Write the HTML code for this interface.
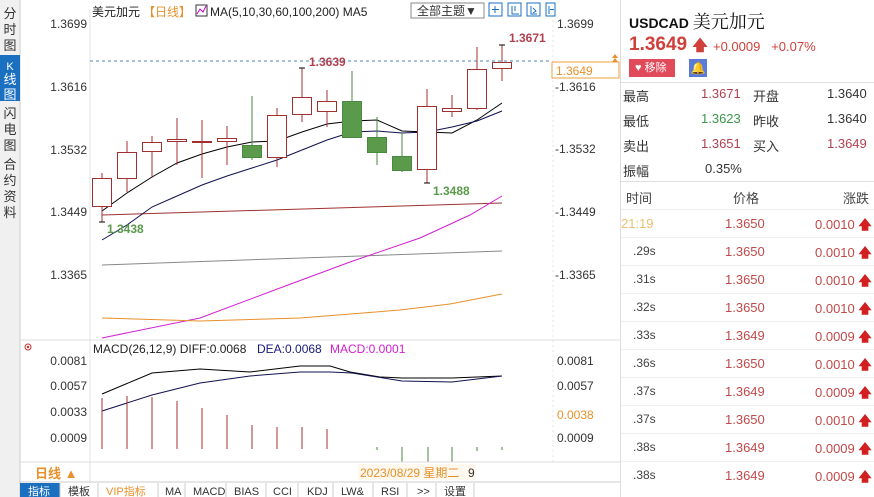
<!DOCTYPE html>
<html><head><meta charset="utf-8"><style>
*{margin:0;padding:0;box-sizing:border-box}
body{width:874px;height:497px;overflow:hidden;background:#fff;font-family:"Liberation Sans","Noto Sans CJK SC",sans-serif;position:relative}
svg{position:absolute;left:0;top:0}
.rp{position:absolute;left:620px;top:0;width:254px;height:497px;border-left:1px solid #ddd}
.r{position:absolute;font-size:13px}
</style></head><body>
<svg width="620" height="497" font-family="Liberation Sans, Noto Sans CJK SC, sans-serif">
<!-- left sidebar -->
<rect x="0" y="0" width="20" height="497" fill="#f0f0f0"/>
<line x1="20" y1="0" x2="20" y2="497" stroke="#ccc"/>
<rect x="0" y="55" width="20" height="46" fill="#1a6fc0"/>
<g font-size="13" fill="#333" text-anchor="middle">
<text x="10" y="18">分</text><text x="10" y="34">时</text><text x="10" y="50">图</text>
<text x="10" y="70" fill="#fff" font-size="11">K</text><text x="10" y="84" fill="#fff">线</text><text x="10" y="99" fill="#fff">图</text>
<text x="10" y="118">闪</text><text x="10" y="134">电</text><text x="10" y="150">图</text>
<text x="10" y="169">合</text><text x="10" y="185">约</text><text x="10" y="201">资</text><text x="10" y="217">料</text>
</g>
<line x1="90" y1="10" x2="90" y2="462" stroke="#e4e4e4"/>
<line x1="553" y1="10" x2="553" y2="462" stroke="#e4e4e4" stroke-dasharray="2,3"/>
<!-- header -->
<text x="92" y="16" font-size="12" fill="#222">美元加元</text>
<text x="143" y="16" font-size="12" fill="#e8902a">【日线】</text>
<rect x="196" y="5" width="11" height="11" fill="none" stroke="#333"/><path d="M197 14l3-5 3 3 3-6" stroke="#c0c" fill="none"/>
<text x="210" y="16" font-size="12" fill="#222">MA(5,10,30,60,100,200) MA5</text>
<rect x="411" y="3" width="73" height="15" fill="#fff" stroke="#888"/>
<text x="417" y="15" font-size="12" fill="#333">全部主题▼</text>
<g stroke="#1a6fc0" fill="none"><rect x="489" y="3" width="13" height="13"/><rect x="508" y="3" width="13" height="13"/><rect x="527" y="3" width="13" height="13"/><rect x="546" y="3" width="9" height="13"/>
<path d="M495 6v7M492 9.5h7M512 6v8h7M515 6v5M531 6v8h6M533 8l3 3-3 2M549 6v8M550 9.5h4"/></g>
<!-- axis labels -->
<g font-size="12" fill="#333" text-anchor="end">
<text x="87" y="28">1.3699</text><text x="87" y="91">1.3616</text><text x="87" y="154">1.3532</text><text x="87" y="216">1.3449</text><text x="87" y="279">1.3365</text>
<text x="87" y="365">0.0081</text><text x="87" y="390">0.0057</text><text x="87" y="416">0.0033</text><text x="87" y="442">0.0009</text>
</g>
<g font-size="12" fill="#333">
<text x="557" y="28">1.3699</text><text x="555" y="91">-1.3616</text><text x="555" y="153">-1.3532</text><text x="555" y="216">-1.3449</text><text x="555" y="279">-1.3365</text>
<text x="557" y="365">0.0081</text><text x="557" y="390">0.0057</text><text x="557" y="442">0.0009</text>
<text x="557" y="419" fill="#e8902a">0.0038</text>
</g>
<rect x="552" y="62" width="67" height="16" fill="#fff" stroke="#e8a040"/>
<text x="556" y="75" font-size="12" fill="#e8902a">1.3649</text>
<path d="M612 58l3-4 3 4zM612 62l3-4 3 4z" fill="#e8902a"/>
<line x1="90" y1="61" x2="552" y2="61" stroke="#4a8ab0" stroke-dasharray="3,3"/>
<!-- MAs -->
<polyline fill="none" stroke="#a03030" points="102,215 502,203"/>
<polyline fill="none" stroke="#888" points="102,265 502,251"/>
<polyline fill="none" stroke="#d020d0" points="102,338 200,318 280,288 350,262 420,238 470,215 502,196"/>
<polyline fill="none" stroke="#e8902a" points="102,318 200,321 300,318 400,310 450,304 502,294"/>
<polyline fill="none" stroke="#000" points="102,211 127,193 152,177 177,163 202,154 227,147 252,142 277,141 302,132 327,124 352,121 377,120 402,131 427,132 452,133 477,120 502,103"/>
<polyline fill="none" stroke="#101050" points="102,240 127,225 152,207 177,196 202,185 227,176 252,168 277,160 302,150 327,140 352,132 377,131 402,133 427,132 452,127 477,121 502,111"/>
<!-- candles -->
<g stroke="#a03030" fill="#fff">
<line x1="102" y1="173" x2="102" y2="222"/><rect x="92.5" y="178.5" width="19" height="28"/>
<line x1="127" y1="141" x2="127" y2="192"/><rect x="117.5" y="152.5" width="19" height="26"/>
<line x1="152" y1="136" x2="152" y2="178"/><rect x="142.5" y="142.5" width="19" height="9"/>
<line x1="177" y1="118" x2="177" y2="165"/><rect x="167.5" y="139.5" width="19" height="2"/>
<line x1="202" y1="120" x2="202" y2="178"/><rect x="192.5" y="141.5" width="19" height="1" fill="#a03030"/>
<line x1="227" y1="126" x2="227" y2="165"/><rect x="217.5" y="138.5" width="19" height="3"/>
<line x1="277" y1="108" x2="277" y2="167"/><rect x="267.5" y="115.5" width="19" height="42"/>
<line x1="302" y1="68" x2="302" y2="122"/><rect x="292.5" y="97.5" width="19" height="17"/>
<line x1="327" y1="90" x2="327" y2="127"/><rect x="317.5" y="101.5" width="19" height="10"/>
<line x1="427" y1="89" x2="427" y2="183"/><rect x="417.5" y="106.5" width="19" height="63"/>
<line x1="452" y1="95" x2="452" y2="117"/><rect x="442.5" y="108.5" width="19" height="3"/>
<line x1="477" y1="47" x2="477" y2="110"/><rect x="467.5" y="69.5" width="19" height="39"/>
<line x1="502" y1="45" x2="502" y2="81"/><rect x="492.5" y="62.5" width="19" height="6"/>
</g>
<g stroke="#4a8a40" fill="#5a9a4a">
<line x1="252" y1="96" x2="252" y2="160"/><rect x="242.5" y="145.5" width="19" height="12"/>
<line x1="352" y1="71" x2="352" y2="137"/><rect x="342.5" y="101.5" width="19" height="36"/>
<line x1="377" y1="117" x2="377" y2="165"/><rect x="367.5" y="137.5" width="19" height="15"/>
<line x1="402" y1="133" x2="402" y2="172"/><rect x="392.5" y="156.5" width="19" height="14"/>
</g>
<path d="M99 222h6M299 68h6M424 183h6M499 45h6" stroke="#000"/>
<g font-size="12" font-weight="bold">
<text x="309" y="66" fill="#b04050">1.3639</text>
<text x="509" y="42" fill="#b04050">1.3671</text>
<text x="433" y="195" fill="#5a9a4a">1.3488</text>
<text x="107" y="233" fill="#5a9a4a">1.3438</text>
</g>
<line x1="20" y1="340" x2="620" y2="340" stroke="#ddd"/>
<!-- MACD -->
<circle cx="28" cy="347" r="3" fill="none" stroke="#c03030"/><circle cx="28" cy="347" r="1.2" fill="#c03030"/>
<text x="93" y="353" font-size="12" fill="#222">MACD(26,12,9) DIFF:0.0068</text>
<text x="257" y="353" font-size="12" fill="#1a1a7a">DEA:0.0068</text>
<text x="330" y="353" font-size="12" fill="#d020d0">MACD:0.0001</text>
<polyline fill="none" stroke="#000" points="102,394 152,373 200,369 250,372 300,366 330,366 350,372 380,377 402,378 452,378 502,376"/>
<polyline fill="none" stroke="#101050" points="102,411 152,395 200,383 250,376 300,372 330,372 352,373 377,377 402,381 452,382 502,376"/>
<g stroke="#a03030"><path d="M102 398V449M127 396V449M152 397V449M177 401V449M202 408V449M227 415V449M252 425V449M277 427V449M302 427V449M327 429V449"/></g>
<g stroke="#4a8a40"><path d="M377 447V450M402 447V462M428 447V462M452 447V462M477 447V451M502 447V450"/></g>
<!-- date bar -->
<line x1="20" y1="462" x2="620" y2="462" stroke="#ddd"/>
<text x="35" y="478" font-size="13" fill="#e8902a" font-weight="bold">日线 ▲</text>
<line x1="90" y1="462" x2="90" y2="482" stroke="#ddd"/>
<rect x="358" y="464" width="118" height="16" fill="#fff8ee"/>
<text x="360" y="477" font-size="12" fill="#e8902a">2023/08/29 星期二</text><text x="468" y="477" font-size="12" fill="#333">9</text>
<line x1="20" y1="482" x2="620" y2="482" stroke="#ccc"/>
<!-- tabs -->
<rect x="20" y="483" width="40" height="14" fill="#1a6fc0"/>
<g font-size="11" fill="#333">
<text x="28" y="495" fill="#fff">指标</text>
<text x="68" y="495">模板</text>
<text x="106" y="495" fill="#e8902a">VIP指标</text>
<text x="165" y="495">MA</text><text x="193" y="495">MACD</text><text x="234" y="495">BIAS</text>
<text x="273" y="495">CCI</text><text x="307" y="495">KDJ</text><text x="341" y="495">LW&amp;</text>
<text x="381" y="495">RSI</text><text x="417" y="495">&gt;&gt;</text><text x="444" y="495">设置</text>
</g>
<g stroke="#ccc"><path d="M60 483v14M98 483v14M158 483v14M185 483v14M226 483v14M266 483v14M298 483v14M333 483v14M373 483v14M407 483v14M436 483v14M474 483v14"/></g>
</svg>
<div class="rp">
<div class="r" style="left:8px;top:8px;font-size:14px;font-weight:bold;color:#111">USDCAD <span style="font-family:'Noto Serif CJK SC',serif;font-size:18px;font-weight:normal">美元加元</span></div>
<div class="r" style="left:8px;top:34px;font-size:19px;font-weight:bold;color:#d0403a">1.3649 <span style="font-size:15px">🡅</span></div>
<div class="r" style="left:92px;top:39px;color:#d0403a">+0.0009&nbsp;&nbsp;&nbsp;+0.07%</div>
<div class="r" style="left:8px;top:59px;width:46px;height:18px;background:#e04a5a;color:#fff;font-size:11px;line-height:18px;padding-left:6px">♥ 移除</div>
<div class="r" style="left:68px;top:59px;width:18px;height:18px;background:#5a7ad8;color:#fff;font-size:12px;text-align:center;line-height:18px">🔔</div>
<div style="position:absolute;left:0;top:82px;width:254px;border-top:1px solid #ddd"></div>
<div class="r" style="left:2px;top:86px;color:#333">最高</div><div class="r" style="left:80px;top:86px;color:#b04050">1.3671</div><div class="r" style="left:132px;top:86px;color:#333">开盘</div><div class="r" style="left:206px;top:86px;color:#333">1.3640</div>
<div class="r" style="left:2px;top:111px;color:#333">最低</div><div class="r" style="left:80px;top:111px;color:#3a9a4a">1.3623</div><div class="r" style="left:132px;top:111px;color:#333">昨收</div><div class="r" style="left:206px;top:111px;color:#333">1.3640</div>
<div class="r" style="left:2px;top:136px;color:#333">卖出</div><div class="r" style="left:80px;top:136px;color:#b04050">1.3651</div><div class="r" style="left:132px;top:136px;color:#333">买入</div><div class="r" style="left:206px;top:136px;color:#b04050">1.3649</div>
<div class="r" style="left:2px;top:161px;color:#333">振幅</div><div class="r" style="left:84px;top:161px;color:#333">0.35%</div>
<div style="position:absolute;left:0;top:181px;width:254px;border-top:1px solid #ddd"></div>
<div class="r" style="left:5px;top:188px;color:#444">时间</div><div class="r" style="left:112px;top:188px;color:#444">价格</div><div class="r" style="left:222px;top:188px;color:#444">涨跌</div>
<div id="t"></div>
</div>
<script>
var d=[["21:19","1.3650","0.0010"],[".29s","1.3650","0.0010"],[".31s","1.3650","0.0010"],[".32s","1.3650","0.0010"],[".33s","1.3649","0.0009"],[".36s","1.3650","0.0010"],[".37s","1.3649","0.0009"],[".37s","1.3650","0.0010"],[".38s","1.3649","0.0009"],[".38s","1.3649","0.0009"]];
var h="";d.forEach(function(r,i){var y=216+i*28;
h+='<div style="position:absolute;left:0;top:'+(y-7)+'px;width:254px;border-top:1px solid #eee"></div>';
h+='<div class="r" style="left:'+(i?12:0)+'px;top:'+y+'px;color:'+(i?'#444':'#e8c070')+';font-size:'+(i?12:13)+'px">'+r[0]+'</div>';
h+='<div class="r" style="left:104px;top:'+y+'px;color:#c04a4a">'+r[1]+'</div>';
h+='<div class="r" style="left:194px;top:'+y+'px;color:#c04a4a">'+r[2]+' <b style="color:#d02020">🡅</b></div>';});
document.getElementById("t").innerHTML=h;
</script>
</body></html>
